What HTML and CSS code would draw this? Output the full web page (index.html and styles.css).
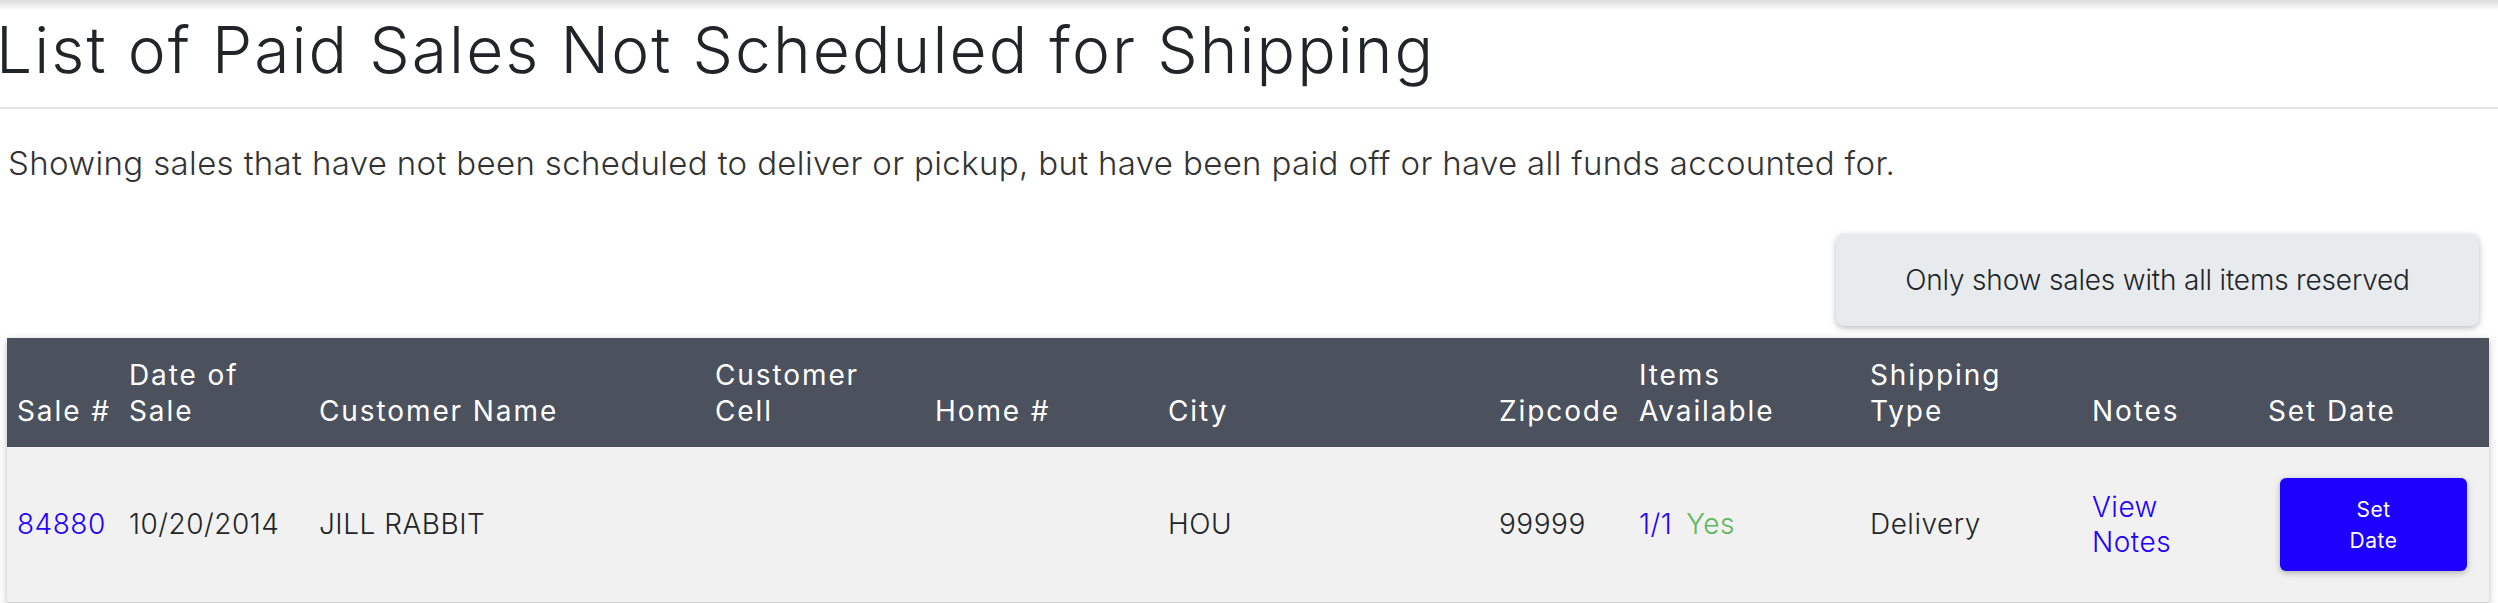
FILE: index.html
```html
<!DOCTYPE html>
<html lang="en">
<head>
    <meta charset="UTF-8">
    <meta name="viewport" content="width=device-width, initial-scale=1.0">
    <title>Paid Sales Not Scheduled</title>
    <link rel="stylesheet" href="styles.css">
</head>
<body>
    <div class="top-shadow"></div>
    <h1 class="page-title">List of Paid Sales Not Scheduled for Shipping</h1>
    <hr class="title-rule">
    <p class="lead">Showing sales that have not been scheduled to deliver or pickup, but have been paid off or have all funds accounted for.</p>

    <div class="filter-row">
        <button class="filter-btn" id="reserved-filter">Only show sales with all items reserved</button>
    </div>

    <table class="sales-table">
        <colgroup>
            <col style="width: 112px">
            <col style="width: 190px">
            <col style="width: 396px">
            <col style="width: 220px">
            <col style="width: 233px">
            <col style="width: 331px">
            <col style="width: 140px">
            <col style="width: 231px">
            <col style="width: 222px">
            <col style="width: 176px">
            <col style="width: 231px">
        </colgroup>
        <thead>
            <tr>
                <th>Sale #</th>
                <th>Date of<br>Sale</th>
                <th>Customer Name</th>
                <th>Customer<br>Cell</th>
                <th>Home #</th>
                <th>City</th>
                <th>Zipcode</th>
                <th>Items<br>Available</th>
                <th>Shipping<br>Type</th>
                <th>Notes</th>
                <th>Set Date</th>
            </tr>
        </thead>
        <tbody>
            <tr>
                <td><a href="#" class="link">84880</a></td>
                <td>10/20/2014</td>
                <td>JILL RABBIT</td>
                <td></td>
                <td></td>
                <td>HOU</td>
                <td>99999</td>
                <td><a href="#" class="link">1/1</a><span class="yes">Yes</span></td>
                <td>Delivery</td>
                <td><a href="#" class="link notes-link">View Notes</a></td>
                <td class="center"><button class="set-date-btn"><span>Set Date</span></button></td>
            </tr>
        </tbody>
    </table>

    <script>
        document.getElementById('reserved-filter').addEventListener('click', function() {
            this.classList.toggle('active');
        });
    </script>
</body>
</html>
```

FILE: styles.css
```css
body {
    margin: 0;
    font-family: Inter, "Open Sans", sans-serif;
    font-weight: 300;
    color: #212529;
    background: #fff;
    letter-spacing: 0.5px;
}
.top-shadow {
    height: 10px;
    background: linear-gradient(#dcdcdc, #fff);
}
.page-title {
    font-size: 64px;
    font-weight: 300;
    line-height: 1.2;
    letter-spacing: 2.1px;
    margin: 2px 0 0 -4px;
}
.title-rule {
    border: none;
    height: 2px;
    background: #e3e3e3;
    margin: 18px 0 0;
}
.lead {
    font-size: 33px;
    line-height: 1.5;
    letter-spacing: 0.35px;
    margin: 30px 0 0 8px;
    color: #333;
}
.filter-row {
    display: flex;
    justify-content: flex-end;
    padding-right: 19px;
    margin-top: 46px;
}
.filter-btn {
    width: 643px;
    height: 92px;
    padding: 0;
    font-family: inherit;
    font-weight: 300;
    font-size: 28px;
    letter-spacing: -0.18px;
    color: #212529;
    background: #e8ebee;
    border: none;
    border-radius: 8px;
    box-shadow: 0 2px 5px rgba(0, 0, 0, 0.16), 0 2px 10px rgba(0, 0, 0, 0.12);
    cursor: pointer;
}
.sales-table {
    margin: 12px 0 0 7px;
    width: 2482px;
    table-layout: fixed;
    border-collapse: collapse;
    font-size: 28px;
    box-shadow: 0 2px 5px rgba(0, 0, 0, 0.16), 0 2px 10px rgba(0, 0, 0, 0.12);
}
.sales-table th {
    background: #4b515d;
    color: #fff;
    font-weight: 400;
    letter-spacing: 1.9px;
    white-space: nowrap;
    text-align: left;
    vertical-align: bottom;
    line-height: 36px;
    height: 109px;
    box-sizing: border-box;
    padding: 0 10px 18px;
}
.sales-table td {
    background: #f1f1f1;
    height: 155px;
    padding: 0 10px;
    line-height: 35px;
    vertical-align: middle;
    border-bottom: 2px solid #d3d3d3;
}
.sales-table td.center {
    text-align: center;
}
.link {
    color: #2200ff;
    text-decoration: none;
}
.notes-link {
    display: inline-block;
    width: min-content;
}
.yes {
    color: #5cb85c;
    margin-left: 14px;
}
.set-date-btn {
    width: 187px;
    height: 93px;
    font-family: inherit;
    font-size: 21px;
    font-weight: 400;
    letter-spacing: inherit;
    line-height: 31px;
    color: #fff;
    background: #1e00ff;
    border: none;
    border-radius: 6px;
    box-shadow: 0 2px 5px rgba(0, 0, 0, 0.16), 0 2px 10px rgba(0, 0, 0, 0.12);
    cursor: pointer;
}
.set-date-btn span {
    display: inline-block;
    width: min-content;
}
```
